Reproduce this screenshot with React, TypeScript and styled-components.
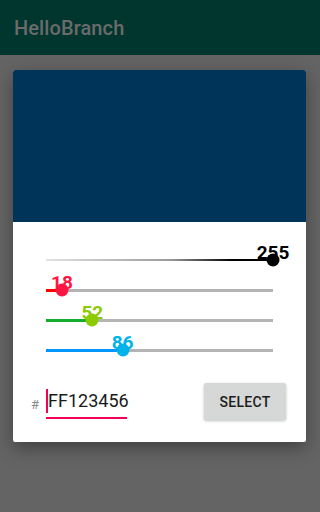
import React from "react";
import styled, { createGlobalStyle } from "styled-components";

const GlobalStyle = createGlobalStyle`
    html, body {
        margin: 0;
        padding: 0;
        background: #646464;
        font-family: Roboto, "Liberation Sans", sans-serif;
    }
`;

const Page = styled.div`
    width: 320px;
    min-height: 512px;
    background: #646464;
    overflow: hidden;
`;

const AppBar = styled.header`
    height: 55px;
    background: #00362e;
    display: flex;
    align-items: center;
    padding-left: 14px;
    box-sizing: border-box;
`;

const AppTitle = styled.h1`
    margin: 0;
    font-size: 20px;
    font-weight: 500;
    color: #6b6b6b;
    letter-spacing: 0.1px;
`;

const DialogArea = styled.div`
    padding: 15px 14px 0 13px;
`;

const Dialog = styled.div`
    background: #ffffff;
    border-radius: 2px;
    overflow: hidden;
    box-shadow: 0 6px 18px rgba(0, 0, 0, 0.35);
`;

const Preview = styled.div<{ $color: string }>`
    height: 152px;
    background: ${ props => props.$color };
`;

const SliderList = styled.div`
    padding: 23px 33px 0 33px;
    display: flex;
    flex-direction: column;
`;

const SliderRow = styled.div`
    position: relative;
    height: 30px;
    display: flex;
    align-items: center;
`;

const Track = styled.div<{ $thick: number }>`
    width: 100%;
    height: ${ props => props.$thick }px;
`;

const Thumb = styled.span<{ $color: string }>`
    position: absolute;
    top: 50%;
    width: 13px;
    height: 13px;
    border-radius: 50%;
    background: ${ props => props.$color };
    transform: translate(-50%, -50%);
`;

const ValueLabel = styled.span<{ $color: string }>`
    position: absolute;
    bottom: 13px;
    transform: translateX(-50%);
    font-size: 19px;
    font-weight: 700;
    line-height: 1;
    color: ${ props => props.$color };
`;

const HexRow = styled.div`
    display: flex;
    align-items: center;
    padding: 18px 20px 22px 18px;
`;

const Hash = styled.span`
    font-size: 13px;
    color: #8a8a8a;
    margin-top: 6px;
    margin-right: 7px;
`;

const HexField = styled.div`
    width: 81px;
    margin-top: 4px;
    border-bottom: 2px solid #f50057;
    padding-bottom: 4px;
    display: flex;
    align-items: center;
    font-size: 18px;
    line-height: 24px;
    color: #1a1a1a;
`;

const Caret = styled.span`
    flex-shrink: 0;
    display: block;
    width: 2px;
    height: 24px;
    background: #f50057;
`;

const Spacer = styled.div`
    flex: 1;
`;

const SelectButton = styled.button`
    width: 82px;
    height: 37px;
    border: none;
    border-radius: 2px;
    background: #d6d7d7;
    box-shadow: 0 1px 3px rgba(0, 0, 0, 0.25);
    font-family: Roboto, "Liberation Sans", sans-serif;
    font-size: 14px;
    font-weight: 500;
    color: #1c1c1c;
    letter-spacing: 0.3px;
    padding: 0;
`;

type Channel = {
    name : string;
    value : number;
    track : string;
    accent : string;
    thick : number;
}

const channels : Array<Channel> = [
    { name: "alpha", value: 255, track: "alpha", accent: "#000000", thick: 2 },
    { name: "red", value: 18, track: "#ff0000", accent: "#ff1744", thick: 3 },
    { name: "green", value: 52, track: "#12ad2e", accent: "#8ccb00", thick: 3 },
    { name: "blue", value: 86, track: "#0095ff", accent: "#00b3ea", thick: 3 },
];

const ChannelSlider = ({ value, track, accent, thick } : Channel) => {
    const pct = ( value / 255 ) * 100;
    const background = ( track === "alpha" )
        ? "linear-gradient(to right, #e2e2e2 0%, #9a9a9a 55%, #000000 82%, #000000 100%)"
        : `linear-gradient(to right, ${track} 0%, ${track} ${pct}%, #b4b4b4 ${pct}%, #b4b4b4 100%)`;

    return (
        <SliderRow>
            <Track $thick={thick} style={{ background }} />
            <Thumb $color={accent} style={{ left: `${pct}%` }} />
            <ValueLabel $color={accent} style={{ left: `${pct}%` }}>{value}</ValueLabel>
        </SliderRow>
    )
}

export default function App() {
    return (
        <Page>
            <GlobalStyle />
            <AppBar>
                <AppTitle>HelloBranch</AppTitle>
            </AppBar>
            <DialogArea>
                <Dialog>
                    <Preview $color="#013459" />
                    <SliderList>
                        { channels.map( channel =>
                            <ChannelSlider key={channel.name} {...channel} />
                        )}
                    </SliderList>
                    <HexRow>
                        <Hash>#</Hash>
                        <HexField>
                            <Caret />
                            <span>FF123456</span>
                        </HexField>
                        <Spacer />
                        <SelectButton>SELECT</SelectButton>
                    </HexRow>
                </Dialog>
            </DialogArea>
        </Page>
    )
}
